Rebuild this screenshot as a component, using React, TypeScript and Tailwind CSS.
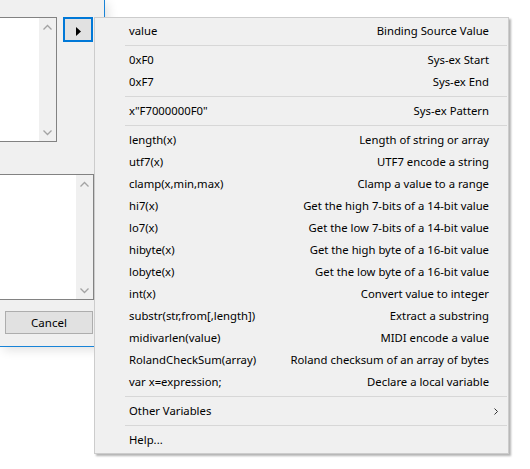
import React from "react";

type Row = { kind: "item"; left: string; right?: string; sub?: boolean } | { kind: "sep" };

const rows: Row[] = [
  { kind: "item", left: "value", right: "Binding Source Value" },
  { kind: "sep" },
  { kind: "item", left: "0xF0", right: "Sys-ex Start" },
  { kind: "item", left: "0xF7", right: "Sys-ex End" },
  { kind: "sep" },
  { kind: "item", left: 'x"F7000000F0"', right: "Sys-ex Pattern" },
  { kind: "sep" },
  { kind: "item", left: "length(x)", right: "Length of string or array" },
  { kind: "item", left: "utf7(x)", right: "UTF7 encode a string" },
  { kind: "item", left: "clamp(x,min,max)", right: "Clamp a value to a range" },
  { kind: "item", left: "hi7(x)", right: "Get the high 7-bits of a 14-bit value" },
  { kind: "item", left: "lo7(x)", right: "Get the low 7-bits of a 14-bit value" },
  { kind: "item", left: "hibyte(x)", right: "Get the high byte of a 16-bit value" },
  { kind: "item", left: "lobyte(x)", right: "Get the low byte of a 16-bit value" },
  { kind: "item", left: "int(x)", right: "Convert value to integer" },
  { kind: "item", left: "substr(str,from[,length])", right: "Extract a substring" },
  { kind: "item", left: "midivarlen(value)", right: "MIDI encode a value" },
  { kind: "item", left: "RolandCheckSum(array)", right: "Roland checksum of an array of bytes" },
  { kind: "item", left: "var x=expression;", right: "Declare a local variable" },
  { kind: "sep" },
  { kind: "item", left: "Other Variables", sub: true },
  { kind: "sep" },
  { kind: "item", left: "Help..." },
];

function Chevron({ up }: { up?: boolean }) {
  return (
    <svg width="9" height="6" viewBox="0 0 9 6" className="block">
      <path
        d={up ? "M0.5 5.5 L4.5 1.5 L8.5 5.5" : "M0.5 0.5 L4.5 4.5 L8.5 0.5"}
        fill="none"
        stroke="#a3a3a3"
        strokeWidth="1.3"
      />
    </svg>
  );
}

function ListBox({ w, h }: { w: string; h: string }) {
  return (
    <div className={`${w} ${h} flex border border-l-0 border-[#828282] bg-white`}>
      <div className="flex-1" />
      <div className="flex w-[17px] flex-col bg-[#f0f0f0]">
        <div className="flex h-[17px] items-center justify-center pt-px">
          <Chevron up />
        </div>
        <div className="flex-1" />
        <div className="flex h-[17px] items-center justify-center">
          <Chevron />
        </div>
      </div>
    </div>
  );
}

export default function App() {
  return (
    <div
      className="relative h-[469px] w-[530px] overflow-hidden bg-white text-black"
      style={{ fontFamily: '"Noto Sans", "Open Sans", sans-serif' }}
    >
      {/* Dialog window (partly off-screen) */}
      <div className="absolute left-0 top-0 flex h-[347px] w-[105px] flex-col border-b border-r border-[#1883d7] bg-[#f0f0f0] pt-[17px] shadow-[3px_3px_10px_rgba(0,0,0,0.12)]">
        <div className="flex items-start">
          <ListBox w="w-[57px]" h="h-[125px]" />
          <button className="ml-[6px] flex h-[25px] w-[30px] items-center justify-center border-2 border-[#0078d7] bg-[#e1e1e1] pt-[3px] pl-px">
            <svg width="5" height="9" viewBox="0 0 5 9" className="block">
              <path d="M0 0 L5 4.5 L0 9 Z" fill="#000" />
            </svg>
          </button>
        </div>
        <div className="mt-[32px]">
          <ListBox w="w-[94px]" h="h-[126px]" />
        </div>
        <button className="ml-[5px] mt-[11px] flex h-[23px] w-[88px] items-center justify-center border border-[#adadad] bg-[#e1e1e1] text-[11.5px]">
          Cancel
        </button>
      </div>

      {/* Context menu */}
      <div className="absolute left-[94px] top-[17px] w-[415px] border border-[#cccccc] bg-[#f0f0f0] py-[2px] text-[11.3px] shadow-[2px_2px_2px_rgba(0,0,0,0.3)]">
        {rows.map((r, i) =>
          r.kind === "sep" ? (
            <div key={i} className="flex h-[7px] items-center pl-[30px] pr-px">
              <div className="h-px w-full bg-[#d7d7d7]" />
            </div>
          ) : (
            <div key={i} className="flex h-[22px] items-center justify-between pl-[34px] pr-[19px]">
              <span>{r.left}</span>
              {r.right && <span>{r.right}</span>}
              {r.sub && (
                <svg width="4" height="7" viewBox="0 0 4 7" className="mr-[-9px] block">
                  <path d="M0.5 0.5 L3.5 3.5 L0.5 6.5" fill="none" stroke="#333" strokeWidth="1" />
                </svg>
              )}
            </div>
          )
        )}
      </div>
    </div>
  );
}
